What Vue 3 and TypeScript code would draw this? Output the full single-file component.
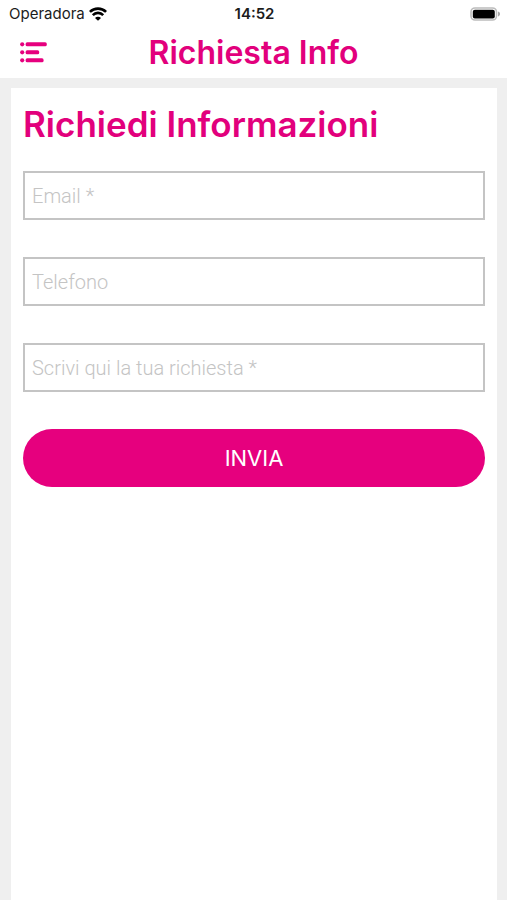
<script setup lang="ts">
import { reactive } from 'vue'

type FieldKey = 'email' | 'phone' | 'message'

interface Field {
  key: FieldKey
  type: string
  label: string
  required: boolean
}

const fields: Field[] = [
  { key: 'email', type: 'email', label: 'Email *', required: true },
  { key: 'phone', type: 'tel', label: 'Telefono', required: false },
  { key: 'message', type: 'text', label: 'Scrivi qui la tua richiesta *', required: true },
]

const form = reactive<Record<FieldKey, string>>({ email: '', phone: '', message: '' })
</script>

<template>
  <div class="screen">
    <div class="status">
      <div class="carrier">
        <span>Operadora</span>
        <svg class="wifi" viewBox="0 0 18 14" aria-hidden="true">
          <path d="M.9 4.9a11.6 11.6 0 0 1 16.2 0" />
          <path d="M3.8 8.1a7.4 7.4 0 0 1 10.4 0" />
          <path class="dot" d="M9 13.8 6 10.9a4.2 4.2 0 0 1 6 0z" />
        </svg>
      </div>
      <time class="clock">14:52</time>
      <svg class="battery" viewBox="0 0 30 14" aria-hidden="true">
        <rect x="1" y="1" width="25.5" height="12" rx="4" fill="#fff" stroke="#bcbcbc" stroke-width="1.6" />
        <rect x="2.8" y="2.8" width="22" height="8.6" rx="2" fill="#000" />
        <path d="M28 4.6c1.6.6 2 1.4 2 2.4s-.4 1.8-2 2.4z" fill="#a8a8a8" />
      </svg>
    </div>

    <header class="bar">
      <button class="menu" type="button" aria-label="Menu">
        <svg viewBox="0 0 27 21" aria-hidden="true">
          <circle cx="2.2" cy="2.3" r="2.1" />
          <rect x="5.6" y="0.3" width="21.2" height="4" rx="1.6" />
          <circle cx="2.2" cy="10.3" r="2.1" />
          <rect x="5.6" y="8.3" width="13.6" height="4" rx="1.6" />
          <circle cx="2.2" cy="18.3" r="2.1" />
          <rect x="5.6" y="16.3" width="18" height="4" rx="1.6" />
        </svg>
      </button>
      <h1>Richiesta Info</h1>
    </header>

    <main>
      <form class="card" @submit.prevent>
        <h2>Richiedi Informazioni</h2>
        <div class="fields">
          <input
            v-for="field in fields"
            :key="field.key"
            v-model="form[field.key]"
            :type="field.type"
            :name="field.key"
            :placeholder="field.label"
            :aria-label="field.label"
            :required="field.required"
          />
          <button class="submit" type="submit">INVIA</button>
        </div>
      </form>
    </main>
  </div>
</template>

<style>
body {
  background: #efefef;
}
</style>

<style scoped>
.screen {
  display: flex;
  flex-direction: column;
  min-height: 100vh;
  font-family: Inter, "Liberation Sans", sans-serif;
  background: #efefef;
}

.status {
  display: grid;
  grid-template-columns: 1fr auto 1fr;
  align-items: center;
  height: 27px;
  padding: 0 7px 0 9px;
  background: #fff;
  color: #1c1c1c;
  font-size: 15px;
}

.carrier {
  display: flex;
  align-items: center;
  gap: 4px;
}

.wifi {
  width: 18px;
  height: 14px;
  fill: none;
  stroke: #000;
  stroke-width: 2.7;
}

.wifi .dot {
  fill: #000;
  stroke: none;
}

.clock {
  font-weight: 600;
}

.battery {
  justify-self: end;
  width: 30px;
  height: 14px;
}

.bar {
  display: grid;
  grid-template-columns: 47px 1fr 47px;
  align-items: center;
  height: 51px;
  background: #fff;
}

.menu {
  display: flex;
  justify-content: flex-end;
  padding: 0;
  border: 0;
  background: none;
  cursor: pointer;
}

.menu svg {
  width: 27px;
  height: 21px;
  fill: #e6007e;
}

h1,
h2 {
  margin: 0;
  color: #e2007c;
  font-weight: 600;
}

h1 {
  font-size: 32px;
  line-height: 40px;
  text-align: center;
}

h2 {
  font-size: 35px;
  line-height: 48px;
}

main {
  display: flex;
  flex: 1;
  padding: 10px 10px 0 11px;
}

.card {
  flex: 1;
  min-width: 0;
  padding: 12px;
  background: #fff;
}

.fields {
  display: flex;
  flex-direction: column;
  gap: 37px;
  margin-top: 23px;
}

input {
  box-sizing: border-box;
  width: 100%;
  height: 49px;
  padding: 0 7px;
  border: 2px solid #c4c4c4;
  border-radius: 0;
  background: #fff;
  color: #333;
  font-family: Roboto, "Liberation Sans", sans-serif;
  font-size: 20px;
  font-weight: 300;
}

input::placeholder {
  color: #c4c4c4;
  opacity: 1;
}

.submit {
  height: 58px;
  padding: 0 24px;
  border: 0;
  border-radius: 29px;
  background: #e6007e;
  color: #fff;
  font-family: inherit;
  font-size: 22px;
  cursor: pointer;
}
</style>
